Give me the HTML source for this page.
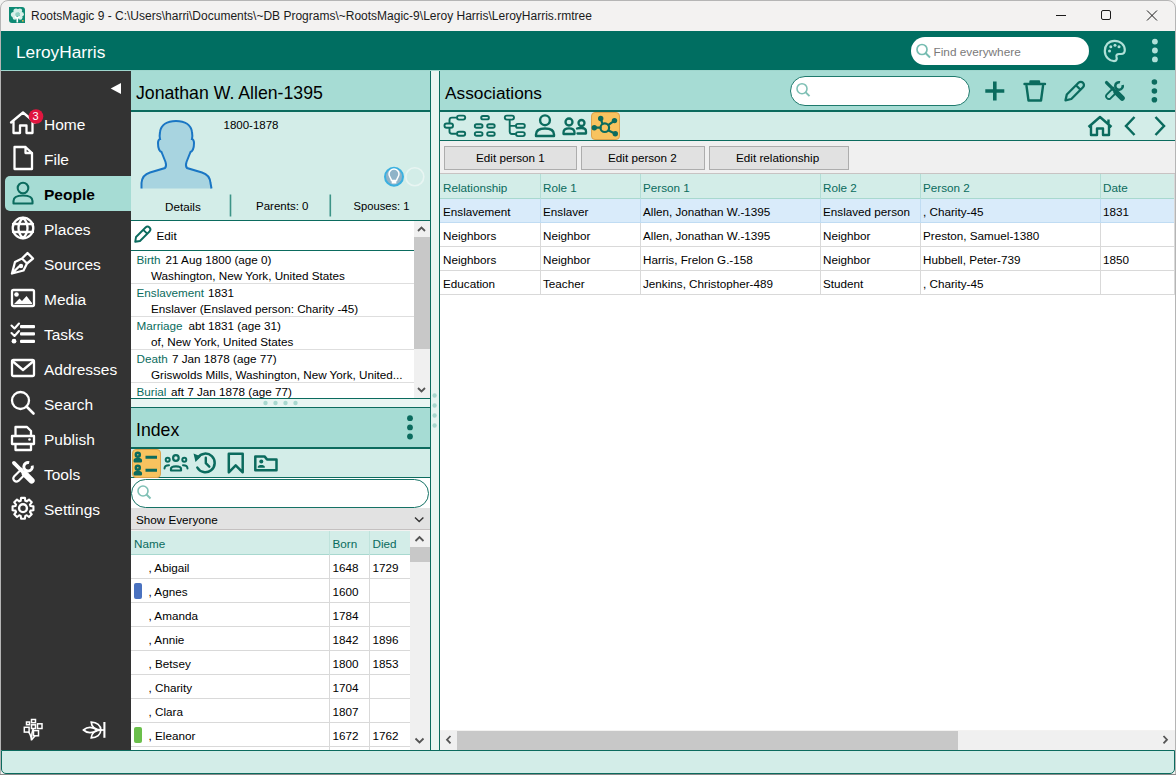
<!DOCTYPE html>
<html><head><meta charset="utf-8">
<style>
*{box-sizing:border-box;margin:0;padding:0}
html,body{width:1176px;height:775px;overflow:hidden;background:#f3f2f1;font-family:"Liberation Sans",sans-serif;font-size:11.7px;color:#000}
.a{position:absolute}
.t{position:absolute;white-space:nowrap;line-height:1}
#win{position:absolute;left:0;top:0;width:1176px;height:775px;border:1px solid #b5b5b5;border-radius:8px 8px 0 0;overflow:hidden;background:#f3f2f1}
</style></head><body>
<svg width="0" height="0" style="position:absolute">
 <defs>
  <symbol id="tools" viewBox="0 0 24 24">
   <path d="M2.8,2.8 L11,11" stroke-width="3.6" stroke-linecap="round"/>
   <path d="M13.2,13.2 L19.8,19.8" stroke-width="5.8" stroke-linecap="round"/>
   <path d="M10.9,7.9 L2.9,15.9 A3,3 0 0 0 7.1,20.1 L13.6,13.6" fill="none" stroke-width="2.1" stroke-linejoin="round"/>
   <path d="M20.36,5.44 A4.1,4.1 0 1 1 17.46,2.54" fill="none" stroke-width="2.8"/>
  </symbol>
 </defs>
</svg>
<div id="win">
  <!-- title bar -->
  <div class="t" style="left:30px;top:9px;font-size:12px;color:#1b1b1b">RootsMagic 9 - C:\Users\harri\Documents\~DB Programs\~RootsMagic-9\Leroy Harris\LeroyHarris.rmtree</div>
</div>
<!-- header -->
<div class="a" style="left:1px;top:31px;width:1174px;height:39px;background:#006e61"></div>
<div class="a" style="left:1px;top:70px;width:1174px;height:1px;background:#9fd6cd"></div>
<div class="t" style="left:16px;top:44px;font-size:17.3px;color:#fff">LeroyHarris</div>

<!-- title icon & controls -->
<svg class="a" style="left:0;top:0" width="1176" height="31" viewBox="0 0 1176 31">
 <path d="M9,7 H22 A3,3 0 0 1 25,10 V23 H12 A3,3 0 0 1 9,20 Z" fill="#0e8a74"/>
 <g fill="#d8efe9">
  <circle cx="13.5" cy="14.5" r="2.6"/><circle cx="16" cy="11" r="2.6"/><circle cx="19.8" cy="10.8" r="2.4"/><circle cx="21.5" cy="14.3" r="2.4"/><circle cx="14.8" cy="17.5" r="2.2"/><circle cx="20.3" cy="17.6" r="2.2"/>
 </g>
 <g fill="#8fd0c2"><circle cx="17.5" cy="14.5" r="2.2"/></g>
 <path d="M17.3,22.5 V17 M17.3,18.5 L14.8,16.5 M17.3,18.5 L19.5,16.5" stroke="#fff" stroke-width="1.6" fill="none"/>
 <rect x="22" y="20" width="1.6" height="1.6" fill="#d4b44a"/>
 <g fill="none" stroke="#1b1b1b" stroke-width="1">
  <path d="M1056,15.5 H1066"/>
  <rect x="1101.5" y="10.5" width="9" height="9" rx="1.5"/>
  <path d="M1147,10.5 L1157,20.5 M1157,10.5 L1147,20.5"/>
 </g>
</svg>
<!-- header search etc -->
<div class="a" style="left:911px;top:37px;width:178px;height:28px;background:#fff;border-radius:14px"></div>
<div class="t" style="left:933.5px;top:46.5px;font-size:11.8px;color:#7a7a7a">Find everywhere</div>
<svg class="a" style="left:900px;top:31px" width="275" height="39" viewBox="900 31 275 39">
 <g fill="none" stroke="#76bcb1" stroke-width="1.7"><circle cx="922" cy="49.5" r="5"/><path d="M925.5,53 L930,57.5" stroke-width="2"/></g>
 <path d="M1114.5,40.8 C1108.5,40.8 1104.8,45.5 1104.8,51 C1104.8,57 1109.5,61.2 1114,61.2 C1117,61.2 1117,58.5 1116.5,57 C1116,55.2 1117,54 1119,54 H1121 C1123.5,54 1124.8,52.5 1124.8,50 C1124.8,45 1120.5,40.8 1114.5,40.8 Z" fill="none" stroke="#b0e0d8" stroke-width="2.2"/>
 <g fill="#b0e0d8">
  <circle cx="1110.8" cy="46.8" r="1.5"/><circle cx="1115" cy="45.3" r="1.5"/><circle cx="1119" cy="46.8" r="1.5"/><circle cx="1109.5" cy="51" r="1.5"/>
  <circle cx="1154.9" cy="41.6" r="2.9"/><circle cx="1154.9" cy="50.5" r="2.9"/><circle cx="1154.9" cy="59.4" r="2.9"/>
 </g>
</svg>

<!-- sidebar -->
<div class="a" style="left:1px;top:71px;width:130px;height:679px;background:#333"></div>

<!-- sidebar content -->
<div class="a" style="left:5px;top:176px;width:126px;height:35px;background:#a6dcd4;border-radius:5px 0 0 5px"></div>
<svg class="a" style="left:0;top:71px" width="131" height="679" viewBox="0 71 131 679">
 <polygon points="121,83 121,94 110.7,88.5" fill="#fff"/>
 <g fill="none" stroke="#fff" stroke-width="2.3" stroke-linejoin="round" stroke-linecap="round">
  <!-- home -->
  <path d="M11,122.5 L23,112.5 L35,122.5 M13.5,121 V133 H20 V125.5 H26.5 V133 H32.5 V121"/>
  <!-- file -->
  <path d="M14.5,147 H25.5 L32,153 V169 H14.5 Z M25.5,147 V153 H32"/>
  <!-- globe -->
  <circle cx="23" cy="228" r="10.3"/>
  <path d="M13,224 H33 M13,232 H33 M23,218 C17,223 17,233 23,238 C29,233 29,223 23,218"/>
  <!-- pen nib -->
  <path d="M12,273.5 L15,262 L22,258.5 L27,263.5 L23.5,270.5 Z M12,273.5 L19,266.5 M22,258.5 L27.5,253 L33,258.5 L27,263.5"/>
  <!-- media -->
  <rect x="12" y="290" width="22" height="16" rx="1.5"/>
  <!-- envelope -->
  <rect x="12" y="360" width="22" height="16" rx="1.5"/>
  <path d="M13.5,362 L23,370 L32.5,362"/>
  <!-- search -->
  <circle cx="20.5" cy="400.5" r="8.5"/>
  <path d="M26.5,406.5 L33.5,413.5" stroke-width="2.6"/>
  <!-- printer -->
  <path d="M15.5,436 V427 H27 L31,431 V436 M12,436 H34 V444 H12 Z M15.5,444 V450 H31 V444"/>
  <!-- gear -->
  <circle cx="23" cy="508.2" r="3.9" stroke-width="2.4"/>
 </g>
 <g fill="#fff">
  <circle cx="36" cy="116.5" r="7.3" fill="#e0163f"/>
  <circle cx="21" cy="266" r="2.2"/>
  <circle cx="16.5" cy="294.5" r="2.3"/>
  <path d="M14,304 L19.5,298.5 L22,301 L26.5,296 L32,303 V304 Z"/>
  <!-- tasks -->
  <path d="M11.5,325.5 L14.5,328.5 L19,323.5" fill="none" stroke="#fff" stroke-width="2.1" stroke-linecap="round" stroke-linejoin="round"/>
  <path d="M11.5,333 L14.5,336 L19,331" fill="none" stroke="#fff" stroke-width="2.1" stroke-linecap="round" stroke-linejoin="round"/>
  <circle cx="14" cy="341.2" r="2.4"/>
  <rect x="20" y="325" width="15" height="3.2" rx="1"/>
  <rect x="20" y="332.3" width="15" height="3.2" rx="1"/>
  <rect x="20" y="339.8" width="15" height="3.2" rx="1"/>
  <circle cx="29.5" cy="439.5" r="1.3" />
  <!-- gear teeth -->
  <path fill="none" stroke="#fff" stroke-width="2.1" stroke-linejoin="round" d="M20.69,500.75 L21.07,497.88 L24.93,497.88 L25.31,500.75 L26.71,501.32 L29.00,499.56 L31.74,502.30 L29.98,504.59 L30.55,505.99 L33.42,506.37 L33.42,510.23 L30.55,510.61 L29.98,512.01 L31.74,514.30 L29.00,517.04 L26.71,515.28 L25.31,515.85 L24.93,518.72 L21.07,518.72 L20.69,515.85 L19.29,515.28 L17.00,517.04 L14.26,514.30 L16.02,512.01 L15.45,510.61 L12.58,510.23 L12.58,506.37 L15.45,505.99 L16.02,504.59 L14.26,502.30 L17.00,499.56 L19.29,501.32 Z"/>
 </g>

 <!-- bottom icons -->
 <g fill="none" stroke="#fff" stroke-width="1.5">
  <rect x="26.5" y="722" width="3" height="2.7"/>
  <rect x="31.5" y="719.5" width="4" height="3.2"/>
  <rect x="31.5" y="724.8" width="4" height="3.7"/>
  <rect x="37.5" y="723.8" width="4.5" height="4.7"/>
  <rect x="24.3" y="727.3" width="4.8" height="4.8"/>
  <rect x="33.5" y="730.6" width="5" height="5.2"/>
  <path d="M31.5,740.5 C31,736 30.5,733 28,732 M31.5,740.5 C31.5,735 32,731 33.5,728.5 M31.5,740 C33,738 34.5,737 35,735.8"/>
 </g>
 <g fill="none" stroke="#fff" stroke-width="1.7">
  <path d="M104.4,722 V737.8" stroke-width="2.1"/>
  <path d="M97,730 H104.4"/>
  <path d="M83.5,730 C87,726.8 92,726.3 97.5,730 C92,733.7 87,733.2 83.5,730 Z"/>
  <path d="M91.2,722.2 C97,722.3 100.8,725.5 100.8,730 C95.5,729.6 91.6,727 91.2,722.2 Z"/>
  <path d="M91.2,737.8 C97,737.7 100.8,734.5 100.8,730 C95.5,730.4 91.6,733 91.2,737.8 Z"/>
 </g>
</svg>

<svg class="a" style="left:0;top:176px" width="131" height="35" viewBox="0 176 131 35">
 <g fill="none" stroke="#0b6b5e" stroke-width="2.1">
  <circle cx="23" cy="188" r="5.3"/>
  <path d="M13.5,203.5 V201 C13.5,197 18,195.5 23,195.5 C28,195.5 32.5,197 32.5,201 V203.5 Z" stroke-linejoin="round"/>
 </g>
</svg>
<div class="t" style="left:32.5px;top:110.5px;font-size:11px;color:#fff">3</div>
<svg class="a" style="left:10.5px;top:459.5px;color:#fff" width="25" height="25"><use href="#tools" fill="#fff" stroke="#fff"/></svg>
<div class="t" style="left:44px;top:117.0px;font-size:15.5px;color:#fff">Home</div>
<div class="t" style="left:44px;top:152.0px;font-size:15.5px;color:#fff">File</div>
<div class="t" style="left:44px;top:187.0px;font-size:15.5px;color:#000;font-weight:bold">People</div>
<div class="t" style="left:44px;top:222.0px;font-size:15.5px;color:#fff">Places</div>
<div class="t" style="left:44px;top:257.0px;font-size:15.5px;color:#fff">Sources</div>
<div class="t" style="left:44px;top:292.0px;font-size:15.5px;color:#fff">Media</div>
<div class="t" style="left:44px;top:327.0px;font-size:15.5px;color:#fff">Tasks</div>
<div class="t" style="left:44px;top:362.0px;font-size:15.5px;color:#fff">Addresses</div>
<div class="t" style="left:44px;top:397.0px;font-size:15.5px;color:#fff">Search</div>
<div class="t" style="left:44px;top:432.0px;font-size:15.5px;color:#fff">Publish</div>
<div class="t" style="left:44px;top:467.0px;font-size:15.5px;color:#fff">Tools</div>
<div class="t" style="left:44px;top:502.0px;font-size:15.5px;color:#fff">Settings</div>

<!-- people panel -->
<div class="a" style="left:131px;top:71px;width:299px;height:39px;background:#a6dcd4"></div>
<div class="t" style="left:136px;top:84.5px;font-size:17.7px;color:#000">Jonathan W. Allen-1395</div>
<div class="a" style="left:131px;top:110px;width:299px;height:1.5px;background:#0b6b5e"></div>
<div class="a" style="left:131px;top:111.5px;width:299px;height:108.5px;background:#d3ede8"></div>
<svg class="a" style="left:131px;top:111px" width="299" height="109" viewBox="131 111 299 109">
 <path fill="#a8d4e0" stroke="#1a76c4" stroke-width="2" d="M141.5,188.5 L141.5,183 C142,177 145,174 150,172.5 L165,168 C166,167 166.5,165 165.5,162 L161.5,152 C159,151 158,147 158,143 C158,141 159,139 160,139 C159.5,137 159.5,135 160,132 C161,125 167,121 176,121 C185,121 191,125 192,132 C192.5,135 192.5,137 192,139 C193,139 194,141 194,143 C194,147 193,151 190.5,152 L186.5,162 C185.5,165 186,167 187,168 L202,172.5 C207,174 210,177 210.5,183 L211.5,188.5"/>
 <circle cx="394" cy="176.7" r="9" fill="#8fb3c8" stroke="#3bb0e0" stroke-width="2"/>
 <path d="M391.5,180.5 C391,178 389,176.5 389,174 A5,5 0 0 1 399,174 C399,176.5 397,178 396.5,180.5 Z" fill="none" stroke="#fff" stroke-width="1.5"/>
 <rect x="391.7" y="181" width="4.6" height="2.5" fill="#fff"/>
 <circle cx="414.8" cy="176.7" r="9" fill="none" stroke="#e8f5f2" stroke-width="1.6"/>
 <path d="M230.5,194.5 V216.5 M330.3,194.5 V216.5" stroke="#3d9487" stroke-width="1.6"/>
</svg>
<div class="t" style="left:223.5px;top:120px;font-size:11.5px;color:#000">1800-1878</div>
<div class="t" style="left:165px;top:201px;font-size:11.7px;color:#000">Details</div>
<div class="t" style="left:256px;top:201px;font-size:11.5px;color:#000">Parents: 0</div>
<div class="t" style="left:353.5px;top:201px;font-size:11.2px;color:#000">Spouses: 1</div>
<div class="a" style="left:131px;top:220px;width:299px;height:1px;background:#0b6b5e"></div>
<div class="a" style="left:131px;top:221px;width:299px;height:177px;background:#fff"></div>
<div class="a" style="left:430px;top:71px;width:1px;height:679px;background:#0b6b5e"></div>
<div class="a" style="left:431px;top:71px;width:8px;height:679px;background:#e8f5f2"></div>
<div class="a" style="left:438.6px;top:71px;width:1.2px;height:679px;background:#0b6b5e"></div>
<svg class="a" style="left:131px;top:221px" width="299" height="30" viewBox="131 221 299 30">
 <g fill="none" stroke="#0b6b5e" stroke-width="2" stroke-linejoin="round">
  <path d="M135.2,241.8 L136.02,237.02 L145.52,227.52 A2.8,2.8 0 0 1 149.48,231.48 L139.98,240.98 Z M143.3,229.8 L147.2,233.7" stroke-width="1.9"/>
 </g>
</svg>
<div class="t" style="left:156.5px;top:230px;font-size:11.7px;color:#000">Edit</div>
<div class="a" style="left:131px;top:250px;width:283px;height:1.2px;background:#0b6b5e"></div>
<!-- facts -->
<div class="t" style="left:136.5px;top:254px;font-size:11.7px;color:#0a6b5d">Birth</div>
<div class="t" style="left:165.5px;top:254px;font-size:11.7px;color:#000">21 Aug 1800 (age 0)</div>
<div class="t" style="left:151px;top:270px;font-size:11.7px;color:#000">Washington, New York, United States</div>
<div class="a" style="left:131px;top:283px;width:283px;height:1px;background:#dedede"></div>
<div class="t" style="left:136.5px;top:287px;font-size:11.7px;color:#0a6b5d">Enslavement</div>
<div class="t" style="left:208px;top:287px;font-size:11.7px;color:#000">1831</div>
<div class="t" style="left:151px;top:303px;font-size:11.7px;color:#000">Enslaver (Enslaved person: Charity -45)</div>
<div class="a" style="left:131px;top:316px;width:283px;height:1px;background:#dedede"></div>
<div class="t" style="left:136.5px;top:320px;font-size:11.7px;color:#0a6b5d">Marriage</div>
<div class="t" style="left:188.5px;top:320px;font-size:11.7px;color:#000">abt 1831 (age 31)</div>
<div class="t" style="left:151px;top:336px;font-size:11.7px;color:#000">of, New York, United States</div>
<div class="a" style="left:131px;top:349px;width:283px;height:1px;background:#dedede"></div>
<div class="t" style="left:136.5px;top:353px;font-size:11.7px;color:#0a6b5d">Death</div>
<div class="t" style="left:172px;top:353px;font-size:11.7px;color:#000">7 Jan 1878 (age 77)</div>
<div class="t" style="left:151px;top:369px;font-size:11.7px;color:#000">Griswolds Mills, Washington, New York, United...</div>
<div class="a" style="left:131px;top:382px;width:283px;height:1px;background:#dedede"></div>
<div class="a" style="left:131px;top:383px;width:283px;height:15px;overflow:hidden">
 <div class="t" style="left:5.5px;top:3px;font-size:11.7px;color:#0a6b5d">Burial</div>
 <div class="t" style="left:40px;top:3px;font-size:11.7px;color:#000">aft 7 Jan 1878 (age 77)</div>
</div>
<!-- facts scrollbar -->
<div class="a" style="left:414px;top:221px;width:16px;height:177px;background:#f0f0f0"></div>
<div class="a" style="left:414px;top:237px;width:16px;height:112px;background:#c8c8c8"></div>
<svg class="a" style="left:414px;top:221px" width="16" height="177" viewBox="414 221 16 177">
 <path d="M418,231 L421.5,227.5 L425,231 M418,388 L421.5,391.5 L425,388" fill="none" stroke="#555" stroke-width="1.8"/>
</svg>
<!-- splitter -->
<div class="a" style="left:131px;top:398px;width:299px;height:1px;background:#0b6b5e"></div>
<div class="a" style="left:131px;top:399px;width:299px;height:8px;background:#e8f5f2"></div>
<div class="a" style="left:131px;top:407px;width:299px;height:1.2px;background:#0b6b5e"></div>
<svg class="a" style="left:131px;top:390px" width="310" height="45" viewBox="131 390 310 45">
 <g fill="#a8d8cf">
  <circle cx="265.5" cy="403" r="2.2"/><circle cx="275.5" cy="403" r="2.2"/><circle cx="285.5" cy="403" r="2.2"/><circle cx="295.5" cy="403" r="2.2"/>
  <circle cx="434.6" cy="395.5" r="2.2"/><circle cx="434.6" cy="405.5" r="2.2"/><circle cx="434.6" cy="415.5" r="2.2"/><circle cx="434.6" cy="425.5" r="2.2"/>
 </g>
</svg>

<!-- index -->
<div class="a" style="left:131px;top:408px;width:299px;height:39px;background:#a6dcd4"></div>
<div class="t" style="left:136px;top:421.5px;font-size:17.7px;color:#000">Index</div>
<svg class="a" style="left:400px;top:410px" width="20" height="35" viewBox="400 410 20 35">
 <g fill="#0b6b5e"><circle cx="410" cy="418.2" r="2.9"/><circle cx="410" cy="427.4" r="2.9"/><circle cx="410" cy="436.5" r="2.9"/></g>
</svg>
<div class="a" style="left:131px;top:447px;width:299px;height:1.6px;background:#0b6b5e"></div>
<div class="a" style="left:131px;top:448.6px;width:299px;height:28.4px;background:#d3ede8"></div>
<div class="a" style="left:131px;top:477px;width:299px;height:1.5px;background:#0b6b5e"></div>
<div class="a" style="left:131.5px;top:449px;width:29px;height:28.5px;background:#f8c35f;border:1px solid #dca24d;border-radius:4px"></div>
<svg class="a" style="left:131px;top:449px" width="160" height="29" viewBox="131 449 160 29">
 <g fill="none" stroke="#0b6b5e" stroke-width="2.5" stroke-linecap="round" stroke-linejoin="round">
  <circle cx="137.8" cy="454.8" r="2"/><path d="M134.8,461.3 V460.5 C134.8,458.5 140.8,458.5 140.8,460.5 V461.3 Z"/>
  <circle cx="137.8" cy="467.8" r="2"/><path d="M134.8,474.3 V473.5 C134.8,471.5 140.8,471.5 140.8,473.5 V474.3 Z"/>
  <path d="M145.5,457.2 H157 M145.5,470.2 H157" stroke-width="3" stroke-linecap="butt"/>
  <!-- group -->
  <circle cx="175.9" cy="458" r="2.8" stroke-width="2.2"/><circle cx="167.7" cy="459.8" r="2" stroke-width="2"/><circle cx="184.3" cy="459.8" r="2" stroke-width="2"/>
  <path d="M171,470.5 V468.8 C171,465.5 181,465.5 181,468.8 V470.5 Z" stroke-width="2.2"/>
  <path d="M164.5,468.5 C164.5,466 166.5,465.2 169,465.2 M187.5,468.5 C187.5,466 185.5,465.2 183,465.2" stroke-width="2"/>
  <!-- history -->
  <path d="M197.8,457.5 A9.3,9.3 0 1 1 197.3,467.5" stroke-width="2.5"/>
  <path d="M205.8,457.8 V463.2 L209.3,466.7" stroke-width="2.4"/>
  <!-- bookmark -->
  <path d="M228.8,453.7 H242.7 V472.3 L235.7,465.3 L228.8,472.3 Z" stroke-width="2.5"/>
  <!-- folder person -->
  <path d="M255.3,456.4 H264.5 L267,459.4 H276.5 V470.3 H255.3 Z" stroke-width="2.5"/>
 </g>
 <g fill="#0b6b5e">
  <path d="M193.5,453.5 L201,456.5 L195.5,462 Z"/>
  <circle cx="261.3" cy="461.5" r="2"/><path d="M257.8,467.8 V466.8 C257.8,464.5 264.8,464.5 264.8,466.8 V467.8 Z"/>
 </g>
</svg>
<!-- index search -->
<div class="a" style="left:131px;top:478px;width:299px;height:30px;background:#fff"></div>
<div class="a" style="left:131px;top:478.5px;width:298px;height:29.5px;background:#fff;border:1.6px solid #157265;border-radius:15px"></div>
<svg class="a" style="left:135px;top:483px" width="22" height="22" viewBox="135 483 22 22">
 <g fill="none" stroke="#7fc0b5" stroke-width="1.6"><circle cx="143" cy="491" r="5"/><path d="M146.5,494.5 L150.5,498.5" stroke-width="1.9"/></g>
</svg>
<!-- dropdown -->
<div class="a" style="left:131px;top:508px;width:299px;height:22px;background:#e2e2e2;border-bottom:1.5px solid #c4c0c0"></div>
<div class="t" style="left:136px;top:514px;font-size:11.7px;color:#000">Show Everyone</div>
<svg class="a" style="left:410px;top:512px" width="20" height="16" viewBox="410 512 20 16">
 <path d="M415,517.5 L419.2,521.5 L423.4,517.5" fill="none" stroke="#333" stroke-width="1.4"/>
</svg>
<!-- index grid -->
<div class="a" style="left:131px;top:555px;width:279px;height:195px;background:#fff"></div>
<div class="a" style="left:131px;top:531px;width:279px;height:24px;background:#d3ede8;border-bottom:1px solid #a8d8cf"></div>
<div class="a" style="left:329px;top:531px;width:1px;height:219px;background:#d9d9d9"></div>
<div class="a" style="left:369px;top:531px;width:1px;height:219px;background:#d9d9d9"></div>
<div class="a" style="left:329px;top:531px;width:1px;height:24px;background:#bfe3dc"></div>
<div class="a" style="left:369px;top:531px;width:1px;height:24px;background:#bfe3dc"></div>
<div class="t" style="left:134px;top:538px;font-size:11.7px;color:#0a6b5d">Name</div>
<div class="t" style="left:332.5px;top:538px;font-size:11.7px;color:#0a6b5d">Born</div>
<div class="t" style="left:372.5px;top:538px;font-size:11.7px;color:#0a6b5d">Died</div>
<div class="a" style="left:131px;top:578px;width:279px;height:1px;background:#d9d9d9"></div>
<div class="t" style="left:148.5px;top:562.0px;font-size:11.7px;color:#000">, Abigail</div>
<div class="t" style="left:332.5px;top:562.0px;font-size:11.7px;color:#000">1648</div>
<div class="t" style="left:372.5px;top:562.0px;font-size:11.7px;color:#000">1729</div>
<div class="a" style="left:131px;top:602px;width:279px;height:1px;background:#d9d9d9"></div>
<div class="a" style="left:134px;top:583.0px;width:8px;height:15.5px;background:#4a72c0;border-radius:2px"></div>
<div class="t" style="left:148.5px;top:586.0px;font-size:11.7px;color:#000">, Agnes</div>
<div class="t" style="left:332.5px;top:586.0px;font-size:11.7px;color:#000">1600</div>
<div class="a" style="left:131px;top:626px;width:279px;height:1px;background:#d9d9d9"></div>
<div class="t" style="left:148.5px;top:610.0px;font-size:11.7px;color:#000">, Amanda</div>
<div class="t" style="left:332.5px;top:610.0px;font-size:11.7px;color:#000">1784</div>
<div class="a" style="left:131px;top:650px;width:279px;height:1px;background:#d9d9d9"></div>
<div class="t" style="left:148.5px;top:634.0px;font-size:11.7px;color:#000">, Annie</div>
<div class="t" style="left:332.5px;top:634.0px;font-size:11.7px;color:#000">1842</div>
<div class="t" style="left:372.5px;top:634.0px;font-size:11.7px;color:#000">1896</div>
<div class="a" style="left:131px;top:674px;width:279px;height:1px;background:#d9d9d9"></div>
<div class="t" style="left:148.5px;top:658.0px;font-size:11.7px;color:#000">, Betsey</div>
<div class="t" style="left:332.5px;top:658.0px;font-size:11.7px;color:#000">1800</div>
<div class="t" style="left:372.5px;top:658.0px;font-size:11.7px;color:#000">1853</div>
<div class="a" style="left:131px;top:698px;width:279px;height:1px;background:#d9d9d9"></div>
<div class="t" style="left:148.5px;top:682.0px;font-size:11.7px;color:#000">, Charity</div>
<div class="t" style="left:332.5px;top:682.0px;font-size:11.7px;color:#000">1704</div>
<div class="a" style="left:131px;top:722px;width:279px;height:1px;background:#d9d9d9"></div>
<div class="t" style="left:148.5px;top:706.0px;font-size:11.7px;color:#000">, Clara</div>
<div class="t" style="left:332.5px;top:706.0px;font-size:11.7px;color:#000">1807</div>
<div class="a" style="left:131px;top:746px;width:279px;height:1px;background:#d9d9d9"></div>
<div class="a" style="left:134px;top:727.0px;width:8px;height:15.5px;background:#6abf4b;border-radius:2px"></div>
<div class="t" style="left:148.5px;top:730.0px;font-size:11.7px;color:#000">, Eleanor</div>
<div class="t" style="left:332.5px;top:730.0px;font-size:11.7px;color:#000">1672</div>
<div class="t" style="left:372.5px;top:730.0px;font-size:11.7px;color:#000">1762</div>

<div class="a" style="left:410px;top:531px;width:20px;height:219px;background:#f0f0f0"></div>
<div class="a" style="left:410px;top:547px;width:20px;height:15px;background:#c8c8c8"></div>
<svg class="a" style="left:410px;top:531px" width="20" height="219" viewBox="410 531 20 219">
 <path d="M415.5,541 L419.5,537 L423.5,541 M415.5,738.5 L419.5,742.5 L423.5,738.5" fill="none" stroke="#555" stroke-width="1.8"/>
</svg>

<!-- assoc panel -->
<div class="a" style="left:440px;top:71px;width:735px;height:39px;background:#a6dcd4"></div>
<div class="t" style="left:445px;top:85px;font-size:17.3px;color:#000">Associations</div>
<div class="a" style="left:790px;top:76px;width:179.5px;height:29.5px;background:#fff;border:1.3px solid #1e7a6d;border-radius:15px"></div>
<svg class="a" style="left:780px;top:71px" width="395" height="39" viewBox="780 71 395 39">
 <g fill="none" stroke="#7fc0b5" stroke-width="1.6"><circle cx="802" cy="88.7" r="5"/><path d="M805.5,92.2 L809.5,96.2" stroke-width="1.9"/></g>
 <g fill="none" stroke="#0b6b5e" stroke-linejoin="round" stroke-linecap="round">
  <path d="M994.8,81.5 V100.5 M985.3,91 H1004.3" stroke-width="3.6" stroke-linecap="butt"/>
  <path d="M1024.5,84 H1045 M1030.5,84 V81.5 H1039 V84 M1026.5,86 L1028.5,100.5 H1041 L1043,86" stroke-width="2.4"/>
  <path d="M1065.5,100.3 L1066.8,94.5 L1078.5,82.8 A2.8,2.8 0 0 1 1083,87.3 L1071.3,99 Z M1076,85.3 L1080.5,89.8" stroke-width="2.3"/>
 </g>
 <g fill="#0b6b5e">
  <circle cx="1154.4" cy="82" r="2.8"/><circle cx="1154.4" cy="91" r="2.8"/><circle cx="1154.4" cy="99.8" r="2.8"/>
 </g>
</svg>
<div class="a" style="left:440px;top:110px;width:735px;height:1.8px;background:#0b6b5e"></div>
<div class="a" style="left:440px;top:111.8px;width:735px;height:27.8px;background:#d3ede8"></div>
<div class="a" style="left:440px;top:139.6px;width:735px;height:1.5px;background:#0b6b5e"></div>
<div class="a" style="left:590.5px;top:111.6px;width:29.5px;height:28.8px;background:#f8c35f;border:1px solid #dca24d;border-radius:4px"></div>
<svg class="a" style="left:440px;top:111px" width="735" height="30" viewBox="440 111 735 30">
 <g fill="none" stroke="#0b6b5e" stroke-width="2.3" stroke-linecap="round" stroke-linejoin="round">
  <!-- pedigree -->
  <rect x="457" y="115.6" width="8.2" height="4" rx="2" stroke-width="1.9"/>
  <rect x="444.5" y="123.5" width="8.5" height="4.3" rx="2.1" stroke-width="1.9"/>
  <rect x="457" y="131.7" width="8.2" height="4" rx="2" stroke-width="1.9"/>
  <path d="M455.8,117.6 H452 Q449.5,117.6 449.5,120 V122.5 M449.5,128.8 V131.5 Q449.5,133.7 452,133.7 H455.8" stroke-width="1.9"/>
  <!-- family -->
  <rect x="481.2" y="116" width="7.7" height="3.4" rx="1.7" stroke-width="1.9"/>
  <rect x="474.8" y="124.2" width="7.7" height="3.6" rx="1.8" stroke-width="1.9"/>
  <rect x="487.2" y="124.2" width="7.5" height="3.6" rx="1.8" stroke-width="1.9"/>
  <rect x="474.8" y="132.1" width="7.7" height="3.6" rx="1.8" stroke-width="1.9"/>
  <rect x="487.2" y="132.1" width="7.5" height="3.6" rx="1.8" stroke-width="1.9"/>
  <!-- descendant -->
  <rect x="504.8" y="115.6" width="9.2" height="4" rx="2" stroke-width="1.9"/>
  <rect x="516" y="123.9" width="8.8" height="3.9" rx="1.9" stroke-width="1.9"/>
  <rect x="516" y="132.1" width="8.8" height="4" rx="2" stroke-width="1.9"/>
  <path d="M509.7,120.6 V131.5 Q509.7,134 512,134 H515 M509.7,125.9 H515" stroke-width="1.9"/>
  <!-- person -->
  <circle cx="545" cy="120.3" r="4.9" stroke-width="2.4"/>
  <path d="M536,136 V134.5 C536,130 540,128.5 545,128.5 C550,128.5 554,130 554,134.5 V136 Z" stroke-width="2.4"/>
  <!-- two persons -->
  <circle cx="569" cy="122" r="3.5"/><circle cx="581.5" cy="123" r="3"/>
  <path d="M563.5,134 V132.5 C563.5,129 566,128.3 569,128.3 C572,128.3 574.5,129 574.5,132.5 V134 Z"/>
  <path d="M577,128.5 C578,128 580,128 581.5,128 C584.5,128 586,129 586,131.5 V133.5 H577.5"/>
  <!-- network -->
  <circle cx="604.8" cy="127.7" r="4.3" stroke-width="2.2"/>
  <path d="M600.7,118.5 L602.5,123.8 M614.5,120.6 L608.5,124.8 M594.3,127.7 L600.5,127.7 M615.3,133.8 L608.5,130.5" stroke-width="2.2"/>
  <!-- home -->
  <path d="M1088.5,127 L1100,117 L1111.5,127 M1091,125 V135 H1097 V128.5 H1103 V135 H1109 V125 M1108.5,124.5 V119.5" stroke-width="2.4" stroke-linecap="butt"/>
  <path d="M1134.5,117 L1126,126 L1134.5,135 M1155.5,117 L1164,126 L1155.5,135" stroke-width="2.5" stroke-linecap="butt" stroke-linejoin="miter"/>
 </g>
 <g fill="#0b6b5e"><circle cx="600.7" cy="118.5" r="2.7"/><circle cx="614.5" cy="120.6" r="2.7"/><circle cx="594.3" cy="127.7" r="2.7"/><circle cx="615.3" cy="133.8" r="2.7"/></g>
</svg>
<svg class="a" style="left:1103.5px;top:79.5px" width="22" height="22" viewBox="0 0 24 24"><use href="#tools" fill="#0b6b5e" stroke="#0b6b5e"/></svg>
<!-- buttons -->
<div class="a" style="left:440px;top:141px;width:735px;height:33px;background:#f0f0f0;border-bottom:1.2px solid #c8c3c3"></div>
<div class="a" style="left:444px;top:145.5px;width:133px;height:24.5px;background:#e1e1e1;border:1px solid #adadad"></div>
<div class="a" style="left:581px;top:145.5px;width:124px;height:24.5px;background:#e1e1e1;border:1px solid #adadad"></div>
<div class="a" style="left:709px;top:145.5px;width:140px;height:24.5px;background:#e1e1e1;border:1px solid #adadad"></div>
<div class="t" style="left:476px;top:152px;font-size:11.7px;color:#000">Edit person 1</div>
<div class="t" style="left:608px;top:152px;font-size:11.7px;color:#000">Edit person 2</div>
<div class="t" style="left:736px;top:152px;font-size:11.7px;color:#000">Edit relationship</div>
<!-- grid -->
<div class="a" style="left:440px;top:174px;width:735px;height:556px;background:#fff"></div>
<div class="a" style="left:440px;top:174px;width:735px;height:24.5px;background:#d3ede8;border-bottom:1px solid #a8d8cf"></div>
<div class="a" style="left:440px;top:198.5px;width:735px;height:24px;background:#d9ebfa;border-bottom:1px solid #c0dcf3"></div>
<div class="a" style="left:540px;top:174px;width:1px;height:24.5px;background:#b2ddd5"></div>
<div class="a" style="left:540px;top:198.5px;width:1px;height:24px;background:#c0dcf3"></div>
<div class="a" style="left:540px;top:222.5px;width:1px;height:72px;background:#d9d9d9"></div>
<div class="a" style="left:640px;top:174px;width:1px;height:24.5px;background:#b2ddd5"></div>
<div class="a" style="left:640px;top:198.5px;width:1px;height:24px;background:#c0dcf3"></div>
<div class="a" style="left:640px;top:222.5px;width:1px;height:72px;background:#d9d9d9"></div>
<div class="a" style="left:820px;top:174px;width:1px;height:24.5px;background:#b2ddd5"></div>
<div class="a" style="left:820px;top:198.5px;width:1px;height:24px;background:#c0dcf3"></div>
<div class="a" style="left:820px;top:222.5px;width:1px;height:72px;background:#d9d9d9"></div>
<div class="a" style="left:920px;top:174px;width:1px;height:24.5px;background:#b2ddd5"></div>
<div class="a" style="left:920px;top:198.5px;width:1px;height:24px;background:#c0dcf3"></div>
<div class="a" style="left:920px;top:222.5px;width:1px;height:72px;background:#d9d9d9"></div>
<div class="a" style="left:1100px;top:174px;width:1px;height:24.5px;background:#b2ddd5"></div>
<div class="a" style="left:1100px;top:198.5px;width:1px;height:24px;background:#c0dcf3"></div>
<div class="a" style="left:1100px;top:222.5px;width:1px;height:72px;background:#d9d9d9"></div>
<div class="t" style="left:443.0px;top:182.0px;font-size:11.7px;color:#0a6b5d">Relationship</div>
<div class="t" style="left:543.0px;top:182.0px;font-size:11.7px;color:#0a6b5d">Role 1</div>
<div class="t" style="left:643.0px;top:182.0px;font-size:11.7px;color:#0a6b5d">Person 1</div>
<div class="t" style="left:823.0px;top:182.0px;font-size:11.7px;color:#0a6b5d">Role 2</div>
<div class="t" style="left:923.0px;top:182.0px;font-size:11.7px;color:#0a6b5d">Person 2</div>
<div class="t" style="left:1103.0px;top:182.0px;font-size:11.7px;color:#0a6b5d">Date</div>
<div class="t" style="left:443.0px;top:206.0px;font-size:11.7px;color:#000">Enslavement</div>
<div class="t" style="left:543.0px;top:206.0px;font-size:11.7px;color:#000">Enslaver</div>
<div class="t" style="left:643.0px;top:206.0px;font-size:11.7px;color:#000">Allen, Jonathan W.-1395</div>
<div class="t" style="left:823.0px;top:206.0px;font-size:11.7px;color:#000">Enslaved person</div>
<div class="t" style="left:923.0px;top:206.0px;font-size:11.7px;color:#000">, Charity-45</div>
<div class="t" style="left:1103.0px;top:206.0px;font-size:11.7px;color:#000">1831</div>
<div class="a" style="left:440px;top:245.5px;width:735px;height:1px;background:#d9d9d9"></div>
<div class="t" style="left:443.0px;top:230.0px;font-size:11.7px;color:#000">Neighbors</div>
<div class="t" style="left:543.0px;top:230.0px;font-size:11.7px;color:#000">Neighbor</div>
<div class="t" style="left:643.0px;top:230.0px;font-size:11.7px;color:#000">Allen, Jonathan W.-1395</div>
<div class="t" style="left:823.0px;top:230.0px;font-size:11.7px;color:#000">Neighbor</div>
<div class="t" style="left:923.0px;top:230.0px;font-size:11.7px;color:#000">Preston, Samuel-1380</div>
<div class="a" style="left:440px;top:269.5px;width:735px;height:1px;background:#d9d9d9"></div>
<div class="t" style="left:443.0px;top:254.0px;font-size:11.7px;color:#000">Neighbors</div>
<div class="t" style="left:543.0px;top:254.0px;font-size:11.7px;color:#000">Neighbor</div>
<div class="t" style="left:643.0px;top:254.0px;font-size:11.7px;color:#000">Harris, Frelon G.-158</div>
<div class="t" style="left:823.0px;top:254.0px;font-size:11.7px;color:#000">Neighbor</div>
<div class="t" style="left:923.0px;top:254.0px;font-size:11.7px;color:#000">Hubbell, Peter-739</div>
<div class="t" style="left:1103.0px;top:254.0px;font-size:11.7px;color:#000">1850</div>
<div class="a" style="left:440px;top:293.5px;width:735px;height:1px;background:#d9d9d9"></div>
<div class="t" style="left:443.0px;top:278.0px;font-size:11.7px;color:#000">Education</div>
<div class="t" style="left:543.0px;top:278.0px;font-size:11.7px;color:#000">Teacher</div>
<div class="t" style="left:643.0px;top:278.0px;font-size:11.7px;color:#000">Jenkins, Christopher-489</div>
<div class="t" style="left:823.0px;top:278.0px;font-size:11.7px;color:#000">Student</div>
<div class="t" style="left:923.0px;top:278.0px;font-size:11.7px;color:#000">, Charity-45</div>

<div class="a" style="left:1174px;top:174px;width:1px;height:121px;background:#d9d9d9"></div>
<!-- hscroll -->
<div class="a" style="left:440px;top:731px;width:735px;height:19px;background:#f0f0f0"></div>
<div class="a" style="left:457px;top:731px;width:501px;height:19px;background:#c8c8c8"></div>
<svg class="a" style="left:440px;top:731px" width="735" height="19" viewBox="440 731 735 19">
 <path d="M450.5,736 L447,739.7 L450.5,743.4 M1163.5,736 L1167,739.7 L1163.5,743.4" fill="none" stroke="#555" stroke-width="1.8"/>
</svg>
<!-- status -->
<div class="a" style="left:0;top:774px;width:1176px;height:1px;background:#8a8a8a"></div>
<div class="a" style="left:1px;top:750px;width:1174px;height:24.3px;background:#d3ede8;border:1.2px solid #0b6b5e;border-radius:0 0 5px 5px"></div>
</body></html>
